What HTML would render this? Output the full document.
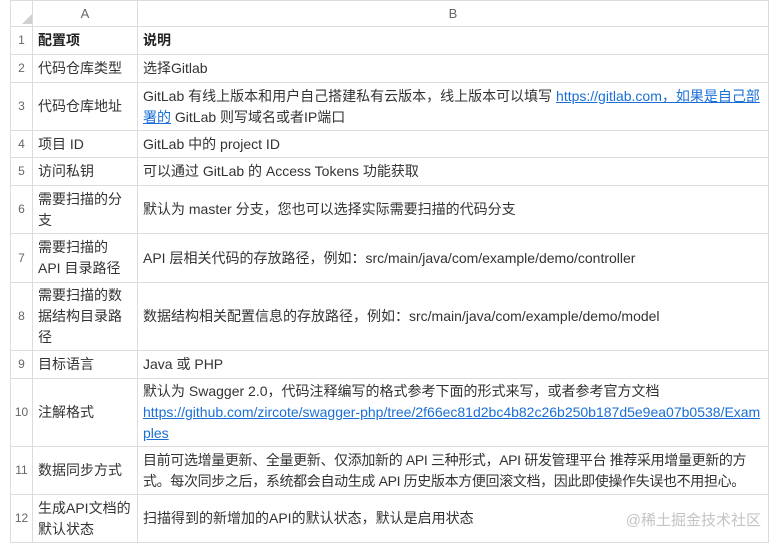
<!DOCTYPE html><html><head><meta charset="utf-8"><style>
body{margin:0;background:#fff;width:775px;height:548px;overflow:hidden;font-family:"Liberation Sans","Noto Sans CJK SC",sans-serif;font-size:14px;color:#333}
table{position:absolute;left:10px;top:0;border-collapse:collapse;table-layout:fixed;width:759px}
td{border:1px solid #dcdcdc;padding:0 5px;line-height:21px;vertical-align:middle;overflow:hidden}
td.n{text-align:center;color:#666;padding:0;font-size:12px}
tr.h td{text-align:center;color:#666;height:25px;font-size:13px}
b{font-weight:bold;color:#222}
a{color:#1a6fd6;text-decoration:underline}
.tri{width:0;height:0;border-left:12px solid transparent;border-bottom:12px solid #d0d0d0;margin:8px 0 0 6px}
.wm{position:absolute;right:14px;top:509px;color:#c4c4c4;font-size:15px}
</style></head><body>
<table>
<colgroup><col style="width:22px"><col style="width:105px"><col></colgroup>
<tr class="h"><td><div class="tri"></div></td><td>A</td><td>B</td></tr>
<tr style="height:28px"><td class="n">1</td><td><b>配置项</b></td><td><b>说明</b></td></tr>
<tr style="height:28px"><td class="n">2</td><td>代码仓库类型</td><td>选择Gitlab</td></tr>
<tr style="height:48px"><td class="n">3</td><td>代码仓库地址</td><td>GitLab 有线上版本和用户自己搭建私有云版本，线上版本可以填写 <a>https://gitlab.com，如果是自己部署的</a> GitLab 则写域名或者IP端口</td></tr>
<tr style="height:27px"><td class="n">4</td><td>项目 ID</td><td>GitLab 中的 project ID</td></tr>
<tr style="height:28px"><td class="n">5</td><td>访问私钥</td><td>可以通过 GitLab 的 Access Tokens 功能获取</td></tr>
<tr style="height:48px"><td class="n">6</td><td>需要扫描的分支</td><td>默认为 master 分支，您也可以选择实际需要扫描的代码分支</td></tr>
<tr style="height:49px"><td class="n">7</td><td>需要扫描的 API 目录路径</td><td>API 层相关代码的存放路径，例如：src/main/java/com/example/demo/controller</td></tr>
<tr style="height:68px"><td class="n">8</td><td>需要扫描的数据结构目录路径</td><td>数据结构相关配置信息的存放路径，例如：src/main/java/com/example/demo/model</td></tr>
<tr style="height:28px"><td class="n">9</td><td>目标语言</td><td>Java 或 PHP</td></tr>
<tr style="height:68px"><td class="n">10</td><td>注解格式</td><td>默认为 Swagger 2.0，代码注释编写的格式参考下面的形式来写，或者参考官方文档<br><a style="word-break:break-all">https://github.com/zircote/swagger-php/tree/2f66ec81d2bc4b82c26b250b187d5e9ea07b0538/Examples</a></td></tr>
<tr style="height:48px"><td class="n">11</td><td>数据同步方式</td><td style="letter-spacing:-0.35px;padding-right:2px">目前可选增量更新、全量更新、仅添加新的 API 三种形式，API 研发管理平台 推荐采用增量更新的方式。每次同步之后，系统都会自动生成 API 历史版本方便回滚文档，因此即使操作失误也不用担心。</td></tr>
<tr style="height:48px"><td class="n">12</td><td>生成API文档的默认状态</td><td>扫描得到的新增加的API的默认状态，默认是启用状态</td></tr>
</table>
<div class="wm">@稀土掘金技术社区</div>
</body></html>
